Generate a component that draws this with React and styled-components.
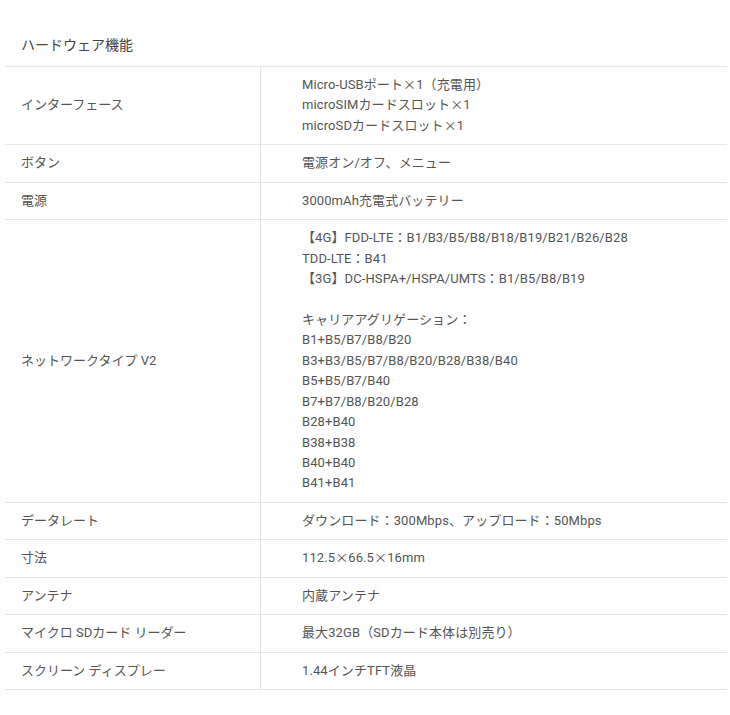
import React from "react";
import styled, { createGlobalStyle } from "styled-components";

const Global = createGlobalStyle`
  html, body { margin: 0; padding: 0; background: #fff; }
  body {
    font-family: "Noto Sans CJK JP", "Noto Sans", sans-serif;
    color: #555;
  }
`;

const Page = styled.div`
  padding: 34px 3px 20px 5px;
`;

const Heading = styled.h2`
  margin: 0 0 11px;
  padding-left: 16px;
  font-size: 14px;
  font-weight: 400;
  line-height: 21px;
  color: #444;
`;

const Spec = styled.div`
  border-top: 1px solid #e6e6e6;
`;

const Row = styled.div`
  display: grid;
  grid-template-columns: 256px 1fr;
  border-bottom: 1px solid #e6e6e6;
`;

const Label = styled.div`
  display: flex;
  align-items: center;
  padding: 8px 16px;
  font-family: Roboto, "Noto Sans CJK JP", sans-serif;
  font-size: 13px;
  line-height: 20.45px;
  color: #555;
  border-right: 1px solid #e6e6e6;
`;

const Value = styled.div`
  padding: 8px 16px 8px 41px;
  font-family: Roboto, "Noto Sans CJK JP", sans-serif;
  font-size: 13px;
  line-height: 20.45px;
  letter-spacing: 0.1px;
  color: #555;
`;

const Line = styled.div`
  height: 20.45px;
  white-space: nowrap;
`;

const Cross = styled.span`
  font-family: "Noto Sans CJK JP", sans-serif;
  line-height: 1;
`;

const withCross = (s) =>
  s.split("×").flatMap((part, i) => (i === 0 ? [part] : [<Cross key={i}>×</Cross>, part]));

const rows = [
  ["インターフェース", ["Micro-USBポート×1（充電用）", "microSIMカードスロット×1", "microSDカードスロット×1"]],
  ["ボタン", ["電源オン/オフ、メニュー"]],
  ["電源", ["3000mAh充電式バッテリー"]],
  [
    "ネットワークタイプ V2",
    [
      "【4G】FDD-LTE：B1/B3/B5/B8/B18/B19/B21/B26/B28",
      "TDD-LTE：B41",
      "【3G】DC-HSPA+/HSPA/UMTS：B1/B5/B8/B19",
      "",
      "キャリアアグリゲーション：",
      "B1+B5/B7/B8/B20",
      "B3+B3/B5/B7/B8/B20/B28/B38/B40",
      "B5+B5/B7/B40",
      "B7+B7/B8/B20/B28",
      "B28+B40",
      "B38+B38",
      "B40+B40",
      "B41+B41",
    ],
  ],
  ["データレート", ["ダウンロード：300Mbps、アップロード：50Mbps"]],
  ["寸法", ["112.5×66.5×16mm"]],
  ["アンテナ", ["内蔵アンテナ"]],
  ["マイクロ SDカード リーダー", ["最大32GB（SDカード本体は別売り）"]],
  ["スクリーン ディスプレー", ["1.44インチTFT液晶"]],
];

export default function App() {
  return (
    <>
      <Global />
      <Page>
        <Heading>ハードウェア機能</Heading>
        <Spec>
          {rows.map(([label, lines]) => (
            <Row key={label}>
              <Label>{label}</Label>
              <Value>
                {lines.map((l, i) => (
                  <Line key={i}>{withCross(l)}</Line>
                ))}
              </Value>
            </Row>
          ))}
        </Spec>
      </Page>
    </>
  );
}
